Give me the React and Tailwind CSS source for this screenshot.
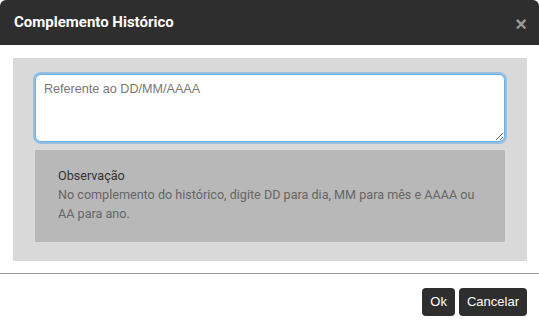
import React, { useState } from "react";

function App() {
  const [texto, setTexto] = useState("");

  return (
    <div className="w-[539px] h-[330px] bg-white rounded-t-md overflow-hidden font-['Roboto',sans-serif]">
      <div className="h-[45px] bg-[#2e2e2e] flex items-center justify-between pl-[14px] pr-[12px]">
        <h1 className="text-white text-[15px] font-bold">Complemento Histórico</h1>
        <button className="text-[#9a9a9a] text-[20px] font-bold leading-none pt-[2px] font-['Liberation_Sans',sans-serif]">×</button>
      </div>

      <div className="pt-[13px] pl-[13px] pr-[12px]">
        <div className="bg-[#d9d9d9] pt-[16px] pl-[22px] pr-[22px] pb-[19px]">
          <textarea
            className="block w-[470px] h-[68px] bg-white rounded-[6px] border border-[#66afe9] shadow-[0_0_0_2px_rgba(102,175,233,0.6)] outline-none px-[8px] py-[5px] text-[12.6px] leading-[18px] text-[#333] placeholder:text-[#777] font-['Liberation_Sans',sans-serif]"
            placeholder="Referente ao DD/MM/AAAA"
            value={texto}
            onChange={(e) => setTexto(e.target.value)}
          />
          <div className="mt-[8px] w-[470px] h-[92px] bg-[#b8b8b8] pl-[23px] pr-[23px] pt-[16px] text-[12.6px] leading-[19px]">
            <p className="text-[#333]">Observação</p>
            <p className="text-[#666]">
              No complemento do histórico, digite DD para dia, MM para mês e AAAA ou AA para ano.
            </p>
          </div>
        </div>
      </div>

      <div className="mt-[12px] border-t border-[#999]" />

      <div className="flex justify-end gap-[4px] pt-[14px] pr-[12px] font-['Liberation_Sans',sans-serif]">
        <button className="h-[28px] px-[8px] bg-[#2e2e2e] text-white text-[13px] rounded-[4px]">Ok</button>
        <button className="h-[28px] px-[8px] bg-[#2e2e2e] text-white text-[13px] rounded-[4px]">Cancelar</button>
      </div>
    </div>
  );
}

export default App;
